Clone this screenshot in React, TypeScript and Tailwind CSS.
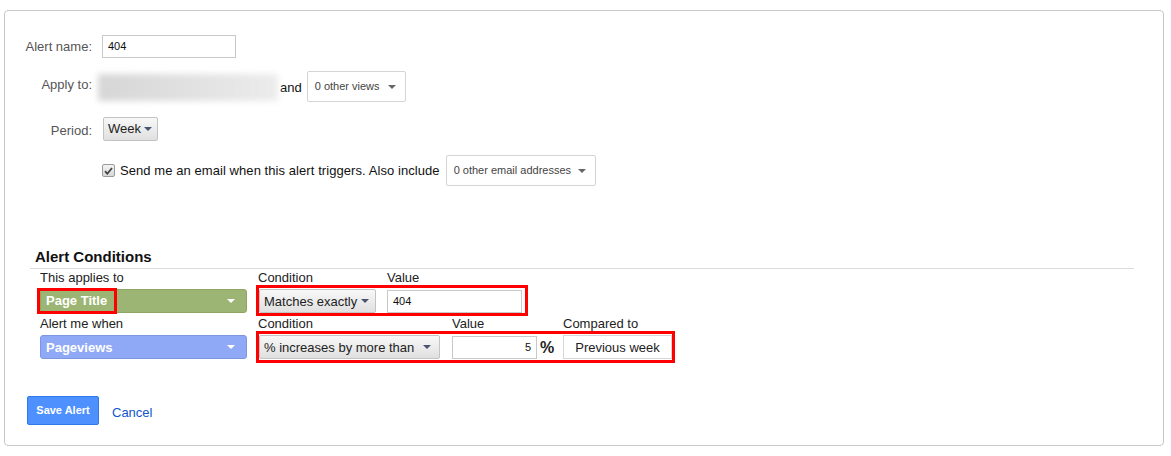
const FONT = "font-['Liberation_Sans',Arial,sans-serif]";

function Caret({ className = "" }: { className?: string }) {
  return (
    <svg width="8" height="4" viewBox="0 0 8 4" className={className} aria-hidden>
      <path d="M0 0h8L4 4z" fill="currentColor" />
    </svg>
  );
}

function MenuButton({ label, width }: { label: string; width: string }) {
  return (
    <div
      className={`flex h-[31px] ${width} items-center justify-between rounded-[2px] border border-[#d4d4d4] bg-white pl-[7px] pr-[9px] text-[11px] text-[#444]`}
    >
      <span>{label}</span>
      <Caret className="text-[#666]" />
    </div>
  );
}

function GrayButton({ label, width, pad = "pr-[5px]" }: { label: string; width: string; pad?: string }) {
  return (
    <div
      className={`flex h-[24px] ${width} items-center justify-between rounded-[2px] border border-[#c3c3c3] bg-gradient-to-b from-[#f8f8f8] to-[#e0e0e0] pl-[4px] ${pad} text-[13px] text-[#222]`}
    >
      <span>{label}</span>
      <Caret className="text-[#4a5470]" />
    </div>
  );
}

function ColorSelect({ label, color }: { label: string; color: string }) {
  return (
    <div
      className={`flex h-[24px] w-[207px] items-center justify-between rounded-[3px] border ${color} pl-[5px] pr-[11px] text-[13px] font-bold text-white`}
    >
      <span>{label}</span>
      <Caret className="text-white" />
    </div>
  );
}

function Field({ value, width, align = "left" }: { value: string; width: string; align?: "left" | "right" }) {
  return (
    <div
      className={`flex h-[23px] ${width} items-center border border-[#c9c9c9] bg-white px-[5px] text-[11px] text-[#111] ${align === "right" ? "justify-end" : ""}`}
    >
      {value}
    </div>
  );
}

export default function App() {
  return (
    <div className={`${FONT} h-[456px] w-[1171px] bg-white pl-[4px] pt-[10px]`}>
      <div className="h-[436px] w-[1160px] rounded-[4px] border border-[#c8c8c8] pt-[24px]">
        {/* Settings */}
        <div className="flex items-center">
          <span className="mt-[1px] w-[87px] text-right text-[13px] text-[#555]">Alert name:</span>
          <div className="ml-[10px]">
            <Field value="404" width="w-[134px]" />
          </div>
        </div>

        <div className="mt-[13px] flex items-start">
          <span className="mt-[4px] w-[87px] text-right text-[13px] text-[#555]">Apply to:</span>
          <div className="mt-[3px] ml-[6px] h-[27px] w-[180px] bg-gradient-to-r from-[#d6d6d6] to-[#ececec] blur-[3px]" />
          <span className="mt-[7px] ml-[2px] text-[13px] text-[#111]">and</span>
          <div className="ml-[5px]">
            <MenuButton label="0 other views" width="w-[99px]" />
          </div>
        </div>

        <div className="mt-[15px] flex items-start">
          <span className="mt-[4px] w-[87px] text-right text-[13px] text-[#555]">Period:</span>
          <div className="ml-[11px]">
            <GrayButton label="Week" width="w-[55px]" />
          </div>
        </div>

        <div className="mt-[14px] flex items-center pl-[97px]">
          <span className="flex h-[13px] w-[13px] items-center justify-center rounded-[2px] border border-[#9a9a9a] bg-gradient-to-b from-[#f4f4f4] to-[#d8d8d8]">
            <svg width="9" height="8" viewBox="0 0 9 8" aria-hidden>
              <path d="M1 4.2l2.3 2.5L8 1" fill="none" stroke="#444" strokeWidth="1.8" />
            </svg>
          </span>
          <span className="ml-[5px] text-[13px] tracking-[0.07px] text-[#111]">
            Send me an email when this alert triggers. Also include
          </span>
          <div className="ml-[6px]">
            <MenuButton label="0 other email addresses" width="w-[150px]" />
          </div>
        </div>

        {/* Alert conditions */}
        <div className="ml-[25px] mr-[29px] mt-[62px]">
          <h3 className="pl-[5px] text-[15px] font-bold leading-[17px] text-[#111]">Alert Conditions</h3>
          <div className="mt-[3px] border-t border-[#dcdcdc]" />

          <div className="pl-[10px] text-[13px] leading-[15px] text-[#222]">
            <div className="mt-[1px] flex">
              <span className="w-[218px]">This applies to</span>
              <span className="w-[129px]">Condition</span>
              <span>Value</span>
            </div>
            <div className="flex items-center">
              <div className="relative">
                <ColorSelect label="Page Title" color="border-[#8ea564] bg-[#9db574]" />
                <div className="absolute -left-[3px] -top-[1px] h-[26px] w-[80px] border-[3px] border-[#f00]" />
              </div>
              <div className="ml-[9px] flex items-center border-[3px] border-[#f00] pb-[0px] pl-0 pr-[3px] pt-[1px]">
                <GrayButton label="Matches exactly" width="w-[117px]" pad="pr-[6px]" />
                <div className="ml-[11px]">
                  <Field value="404" width="w-[135px]" />
                </div>
              </div>
            </div>

            <div className="flex">
              <span className="w-[218px]">Alert me when</span>
              <span className="w-[194px]">Condition</span>
              <span className="w-[111px]">Value</span>
              <span>Compared to</span>
            </div>
            <div className="flex items-center">
              <ColorSelect label="Pageviews" color="border-[#7d96e0] bg-[#8fa9f6]" />
              <div className="ml-[9px] flex items-center border-[3px] border-[#f00] py-[1px]">
                <GrayButton label="% increases by more than" width="w-[181px]" pad="pr-[8px]" />
                <div className="ml-[12px]">
                  <Field value="5" width="w-[85px]" align="right" />
                </div>
                <span className="ml-[3px] w-[23px] text-[16px] font-bold">%</span>
                <div className="flex h-[24px] w-[109px] items-center justify-center border border-[#d6d6d6] bg-white text-[13px]">
                  Previous week
                </div>
              </div>
            </div>
          </div>
        </div>

        {/* Actions */}
        <div className="ml-[22px] mt-[33px] flex items-center">
          <button className="h-[29px] w-[72px] rounded-[2px] border border-[#3079ed] bg-[#4d90fe] text-[11px] font-bold text-white">
            Save Alert
          </button>
          <a className="ml-[13px] mt-[4px] text-[13px] text-[#15c]">Cancel</a>
        </div>
      </div>
    </div>
  );
}
